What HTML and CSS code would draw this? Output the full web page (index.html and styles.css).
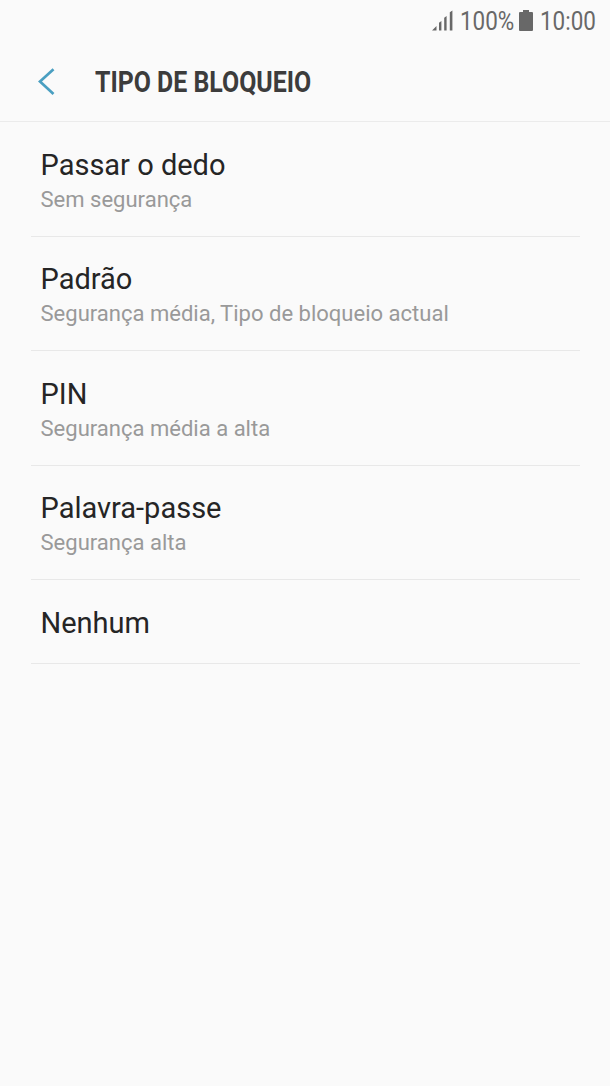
FILE: index.html
```html
<!DOCTYPE html>
<html lang="pt">
<head>
<meta charset="utf-8">
<title>Tipo de bloqueio</title>
<link rel="stylesheet" href="styles.css">
</head>
<body>
<div class="status">
  <svg class="signal" width="21" height="21" viewBox="0 0 21 21"><path d="M0 20.500l4.500-4.500v4.500zM7 12.800l2.400-1.800v9.500H7zM12.200 7.800l2.400-1.800v14.500h-2.400zM17.800 2.300l2.600-1.800v20h-2.600z"/></svg>
  <span class="percent">100%</span>
  <svg class="battery" width="14" height="21" viewBox="0 0 14 21"><path d="M4 0h6v2h3q1 0 1 1v17q0 1-1 1H1q-1 0-1-1V3q0-1 1-1h3z"/></svg>
  <span class="clock">10:00</span>
</div>
<header class="header">
  <svg class="back" width="18" height="28" viewBox="0 0 18 28"><path d="M16.500 1.200L3 13.600l13.500 12.500"/></svg>
  <h1 class="title">TIPO DE BLOQUEIO</h1>
</header>
<main class="list">
  <div class="item"><span class="name">Passar o dedo</span><span class="detail">Sem segurança</span></div>
  <div class="item"><span class="name">Padrão</span><span class="detail">Segurança média, Tipo de bloqueio actual</span></div>
  <div class="item"><span class="name">PIN</span><span class="detail">Segurança média a alta</span></div>
  <div class="item"><span class="name">Palavra-passe</span><span class="detail">Segurança alta</span></div>
  <div class="item item-single"><span class="name">Nenhum</span></div>
</main>
</body>
</html>
```

FILE: styles.css
```css
* { box-sizing: border-box; }
body { margin: 0; min-height: 1086px; background: #fafafa; font-family: Roboto, sans-serif; color: #252525; }
.status { display: flex; justify-content: flex-end; height: 42px; padding: 10px 14px 0 0; color: #686868; font-size: 25.5px; line-height: 23px; }
.status svg { fill: #686868; flex: none; }
.percent, .clock { transform: scaleX(.88); transform-origin: left; white-space: nowrap; }
.percent { width: 54px; margin-left: 7px; }
.battery { margin-left: 5px; }
.clock { width: 56px; margin-left: 7px; }
.header { display: flex; align-items: center; height: 80px; padding-left: 37px; border-bottom: 1px solid #ebebeb; }
.back { fill: none; stroke: #4a9fc1; stroke-width: 2.7; }
.title { margin: 0 0 0 40px; font-size: 29px; line-height: 32px; font-weight: 700; color: #3c3c3c; white-space: nowrap; transform: scaleX(.858); transform-origin: left; }
.list { padding: 0 30px 0 31px; }
.item { display: flex; flex-direction: column; height: 114.6px; padding: 25.6px 9.5px 0; border-bottom: 1px solid #e8e8e8; }
.item-single { height: 84px; }
.name { font-size: 29px; line-height: 35px; }
.detail { font-size: 22.04px; line-height: 33px; color: #999; }
```
